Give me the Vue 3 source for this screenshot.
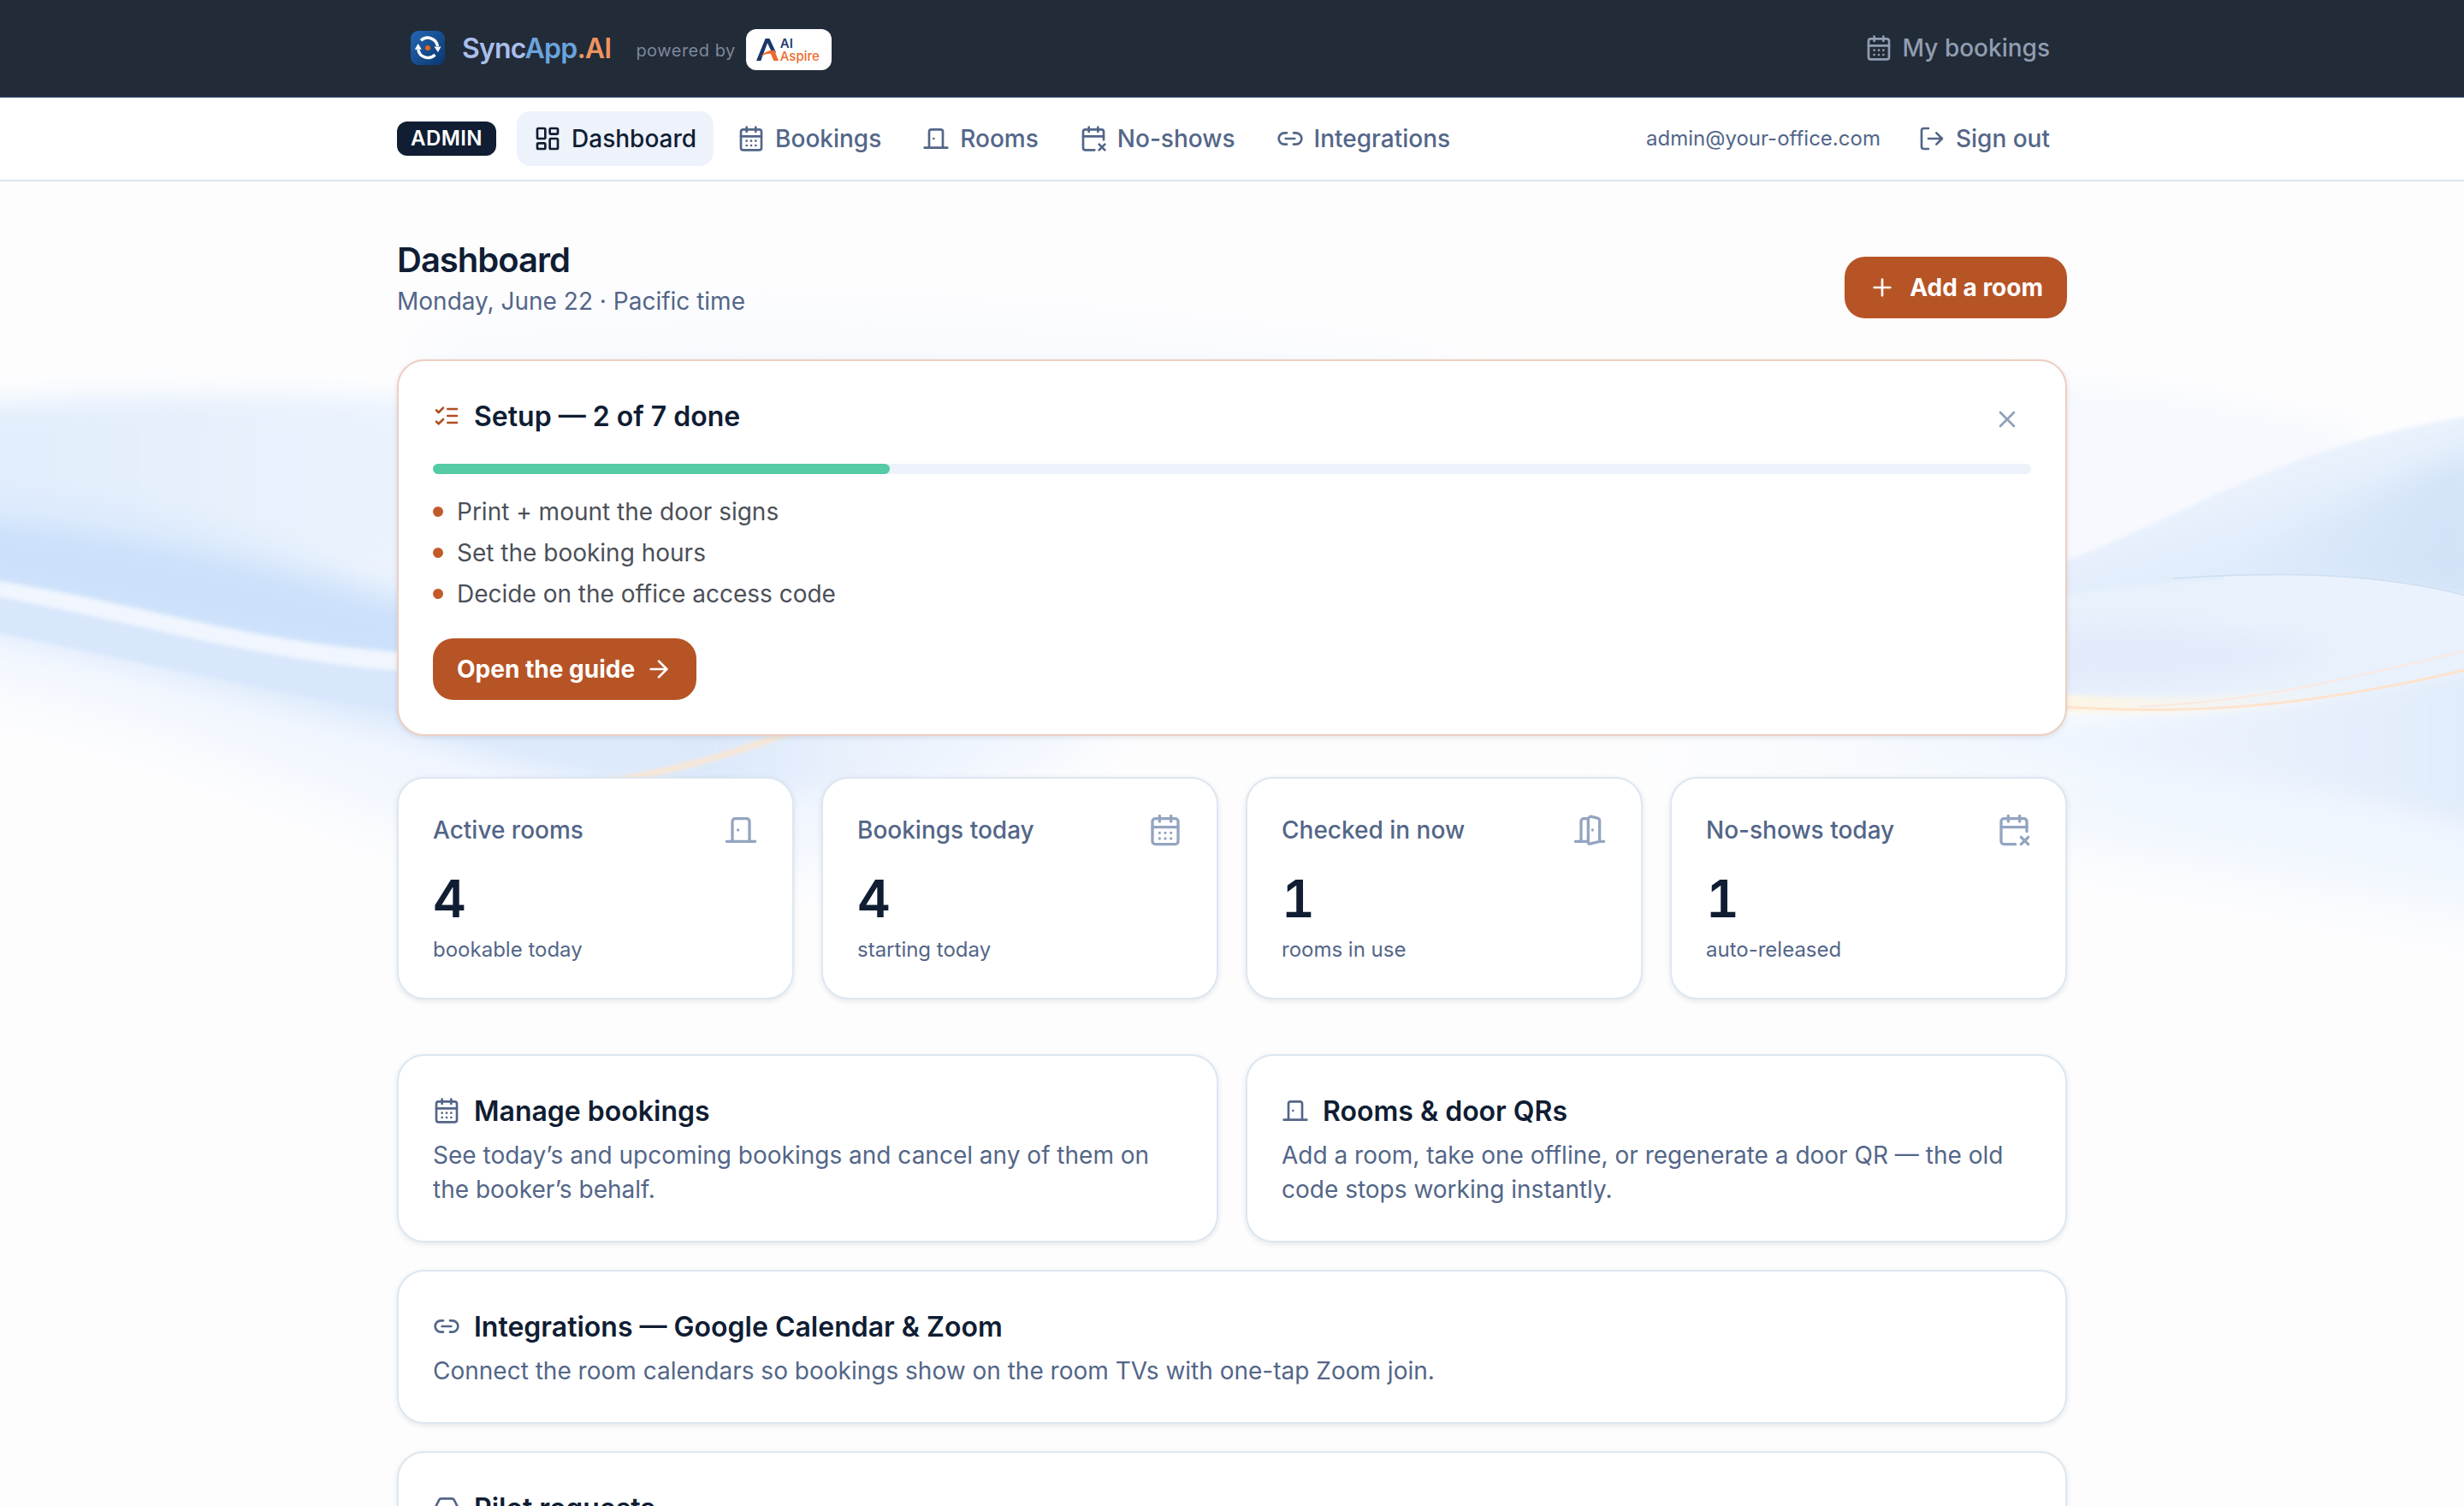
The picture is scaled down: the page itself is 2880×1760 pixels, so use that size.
<template>
  <div class="page">
    <!-- Soft wave artwork behind the whole page -->
    <svg class="waves" viewBox="0 0 2880 1760" preserveAspectRatio="none" aria-hidden="true">
      <defs>
        <filter id="blur-s" x="-10%" y="-50%" width="120%" height="200%"><feGaussianBlur stdDeviation="2.5" /></filter>
        <filter id="blur-m" x="-10%" y="-30%" width="120%" height="160%"><feGaussianBlur stdDeviation="14" /></filter>
        <filter id="blur-l" x="-10%" y="-40%" width="120%" height="180%"><feGaussianBlur stdDeviation="32" /></filter>
        <linearGradient id="left-fade" x1="0" y1="0" x2="1400" y2="0" gradientUnits="userSpaceOnUse">
          <stop offset="0" stop-color="#deebfd" />
          <stop offset="0.6" stop-color="#dce9fb" />
          <stop offset="1" stop-color="#fdfdfe" stop-opacity="0" />
        </linearGradient>
        <linearGradient id="left-top" x1="0" y1="0" x2="900" y2="0" gradientUnits="userSpaceOnUse">
          <stop offset="0" stop-color="#e2eefc" />
          <stop offset="1" stop-color="#f2f7fe" />
        </linearGradient>
        <linearGradient id="right-band" x1="2640" y1="520" x2="2700" y2="700" gradientUnits="userSpaceOnUse">
          <stop offset="0" stop-color="#edf4fd" />
          <stop offset="0.5" stop-color="#e3eefc" />
          <stop offset="1" stop-color="#dae8fa" />
        </linearGradient>
        <linearGradient id="right-deep" x1="2600" y1="0" x2="2880" y2="0" gradientUnits="userSpaceOnUse">
          <stop offset="0" stop-color="#cfe1f7" stop-opacity="0" />
          <stop offset="1" stop-color="#cfe1f7" stop-opacity="0.8" />
        </linearGradient>
        <linearGradient id="right-low" x1="2100" y1="0" x2="2880" y2="0" gradientUnits="userSpaceOnUse">
          <stop offset="0" stop-color="#f0f6fe" stop-opacity="0" />
          <stop offset="0.4" stop-color="#eff5fe" />
          <stop offset="1" stop-color="#e1ecfb" />
        </linearGradient>
        <linearGradient id="right-haze" x1="1900" y1="0" x2="2500" y2="0" gradientUnits="userSpaceOnUse">
          <stop offset="0" stop-color="#f0f6fe" stop-opacity="0" />
          <stop offset="1" stop-color="#f0f6fe" />
        </linearGradient>
        <linearGradient id="glow" x1="2380" y1="0" x2="2780" y2="0" gradientUnits="userSpaceOnUse">
          <stop offset="0" stop-color="#fff6e2" />
          <stop offset="1" stop-color="#fff8ee" stop-opacity="0" />
        </linearGradient>
      </defs>

      <path d="M500 400 C800 360 1200 370 1700 440 L1700 560 L500 560 Z" fill="#f7f9fe" filter="url(#blur-l)" />
      <path d="M-80 500 C150 480 300 480 480 500 L900 560 L1300 860 C1100 960 900 1060 700 1030 C450 990 250 840 -80 790 Z" fill="#f1f6fe" filter="url(#blur-l)" />
      <path d="M-60 478 C120 462 260 456 620 476 L620 700 C300 640 200 640 -60 640 Z" fill="url(#left-top)" filter="url(#blur-m)" />
      <path d="M-60 560 C150 570 280 630 480 690 L900 800 L1200 880 C900 960 700 930 480 860 C300 820 150 770 -60 730 Z" fill="url(#left-fade)" filter="url(#blur-m)" />
      <path d="M-60 605 C150 620 300 660 480 715 L480 775 C300 755 160 715 -60 675 Z" fill="#cbe0fb" filter="url(#blur-m)" />
      <path d="M-10 694 C160 724 300 772 480 784 L480 836 C300 806 150 770 -10 738 Z" fill="#d8e7fc" filter="url(#blur-s)" />
      <path d="M-10 678 C170 706 290 752 480 763 L480 785 C300 772 160 727 -10 696 Z" fill="#f1f6fe" filter="url(#blur-s)" />

      <path d="M2300 450 C2500 440 2600 470 2760 500 L2700 600 L2300 700 Z" fill="#f7f9fe" filter="url(#blur-m)" />
      <path d="M1900 840 C2500 850 2700 840 2940 780 L2940 1080 C2750 1050 2500 980 1900 930 Z" fill="url(#right-haze)" filter="url(#blur-l)" />
      <path d="M2100 850 C2600 860 2700 800 2940 770 L2940 980 C2800 940 2600 880 2100 880 Z" fill="url(#right-low)" filter="url(#blur-m)" />
      <path d="M2380 702 C2500 680 2720 655 2890 697 L2890 780 C2700 830 2560 836 2380 826 Z" fill="#e8f1fc" filter="url(#blur-s)" />
      <path d="M2380 740 C2500 725 2600 735 2720 760 C2620 800 2500 805 2380 800 Z" fill="#e3ebfb" filter="url(#blur-m)" />
      <path d="M2380 668 C2540 615 2660 520 2890 486 L2890 698 C2720 660 2560 676 2380 702 Z" fill="url(#right-band)" filter="url(#blur-s)" />
      <path d="M2600 650 C2700 610 2800 560 2890 530 L2890 695 C2800 672 2700 668 2600 672 Z" fill="url(#right-deep)" filter="url(#blur-m)" />
      <path d="M2600 674 C2700 668 2800 675 2890 698 L2890 730 L2600 730 Z" fill="#e9f2fd" />
      <path d="M2540 676 C2660 668 2780 668 2890 698" fill="none" stroke="#cddff2" stroke-width="1.5" />
      <path d="M2380 820 C2520 829 2640 826 2780 798" fill="none" stroke="url(#glow)" stroke-width="20" filter="url(#blur-s)" />
      <path d="M2380 824 C2560 838 2700 826 2890 781" fill="none" stroke="#fde3cd" stroke-width="3" />
      <path d="M2500 826 C2660 818 2760 788 2890 759" fill="none" stroke="#fbe8e0" stroke-width="2" />
      <path d="M700 916 C790 900 870 880 960 840" fill="none" stroke="#fde6cd" stroke-width="6" filter="url(#blur-s)" />
    </svg>

    <header class="topbar">
      <div class="container topbar-inner">
        <div class="brand">
          <svg class="logo" viewBox="0 0 40 40">
            <defs>
              <linearGradient id="logo-bg" x1="0" y1="0" x2="1" y2="1">
                <stop offset="0" stop-color="#2566b4" />
                <stop offset="1" stop-color="#08386f" />
              </linearGradient>
            </defs>
            <rect width="40" height="40" rx="9" fill="url(#logo-bg)" />
            <g fill="none" stroke="#fff" stroke-width="3.4">
              <path d="M12 11.3A11.6 11.6 0 0 1 31.4 18" />
              <path d="M28.500 28A11.600 11.600 0 0 1 8.800 22" />
            </g>
            <path d="M27.500 18.400h8l-3.600 6.600z" fill="#fff" />
            <path d="M4.800 21.800h8L8.700 15z" fill="#fff" />
            <circle cx="20" cy="20" r="3" fill="#e8661b" />
          </svg>
          <span class="brand-name"><span class="c-sync">Sync</span><span class="c-app">App</span><span class="c-ai">.AI</span></span>
          <span class="powered">powered by</span>
          <span class="aspire">
            <svg class="aspire-mark" viewBox="0 0 28 30">
              <path d="M0 28 11 1h5l8 17-6-2-4.500-9.500L5.500 28z" fill="#1b3767" />
              <path d="M5 23c5-5.500 11-8.500 17-7.500L27 28h-6l-3.500-8.500C13 19 9 20.500 5 23z" fill="#ec6a2d" />
            </svg>
            <span class="aspire-text"><b>AI</b><i>Aspire</i></span>
          </span>
        </div>
        <a class="my-bookings">
          <svg class="icon" viewBox="0 0 24 24" v-html="icons.calendar"></svg>
          My bookings
        </a>
      </div>
    </header>

    <nav class="adminbar">
      <div class="container adminbar-inner">
        <span class="badge">ADMIN</span>
        <a v-for="link in links" :key="link.label" class="tab" :class="{ active: link.active }">
          <svg class="icon" viewBox="0 0 24 24" v-html="icons[link.icon]"></svg>
          {{ link.label }}
        </a>
        <span class="email">admin@your-office.com</span>
        <a class="tab">
          <svg class="icon" viewBox="0 0 24 24" v-html="icons.signOut"></svg>
          Sign out
        </a>
      </div>
    </nav>

    <main class="container main">
      <div class="heading">
        <div>
          <h1>Dashboard</h1>
          <p>Monday, June 22 · Pacific time</p>
        </div>
        <button class="btn btn-add">
          <svg class="icon" viewBox="0 0 24 24" v-html="icons.plus"></svg>
          Add a room
        </button>
      </div>

      <section class="card setup">
        <div class="setup-head">
          <h2>
            <svg class="icon rust" viewBox="0 0 24 24" v-html="icons.checklist"></svg>
            <span>Setup — {{ setup.done }} of {{ setup.total }} done</span>
          </h2>
          <button class="close">
            <svg class="icon" viewBox="0 0 24 24" v-html="icons.close"></svg>
          </button>
        </div>
        <div class="progress">
          <div class="progress-fill" :style="{ width: progress + '%' }"></div>
        </div>
        <ul>
          <li v-for="step in setup.steps" :key="step">{{ step }}</li>
        </ul>
        <button class="btn">
          Open the guide
          <svg class="icon" viewBox="0 0 24 24" v-html="icons.arrow"></svg>
        </button>
      </section>

      <section class="stats">
        <div v-for="stat in stats" :key="stat.label" class="card">
          <div class="stat-head">
            <span>{{ stat.label }}</span>
            <svg class="icon icon-lg" viewBox="0 0 24 24" v-html="icons[stat.icon]"></svg>
          </div>
          <div class="stat-value">{{ stat.value }}</div>
          <div class="stat-note">{{ stat.note }}</div>
        </div>
      </section>

      <section class="shortcuts">
        <a v-for="item in shortcuts" :key="item.title" class="card" :class="{ wide: item.wide }">
          <h2>
            <svg class="icon slate" viewBox="0 0 24 24" v-html="icons[item.icon]"></svg>
            <span>{{ item.title }}</span>
          </h2>
          <p v-if="item.text">{{ item.text }}</p>
        </a>
      </section>
    </main>
  </div>
</template>

<script setup>
import { computed, reactive } from 'vue'

// Icon bodies, all on a 24x24 grid
const calendarBase = '<path d="M8 2v4M16 2v4M3 10h18"/>'
const icons = {
  dashboard:
    '<rect x="3" y="3" width="7" height="9" rx="1"/><rect x="14" y="3" width="7" height="5" rx="1"/><rect x="14" y="12" width="7" height="9" rx="1"/><rect x="3" y="16" width="7" height="5" rx="1"/>',
  calendar:
    calendarBase +
    '<rect x="3" y="4" width="18" height="18" rx="2"/><path d="M8 14h.01M12 14h.01M16 14h.01M8 18h.01M12 18h.01M16 18h.01"/>',
  calendarX:
    calendarBase +
    '<path d="M21 13V6a2 2 0 0 0-2-2H5a2 2 0 0 0-2 2v14a2 2 0 0 0 2 2h8M17 17l5 5M17 22l5-5"/>',
  door: '<path d="M18 20V6a2 2 0 0 0-2-2H8a2 2 0 0 0-2 2v14M2 20h20M10 12v.01"/>',
  doorOpen:
    '<path d="M11 20H2M11 4.562v16.157a1 1 0 0 0 1.242.97L19 20V5.562a2 2 0 0 0-1.515-1.940l-4-1A2 2 0 0 0 11 4.561zM11 4H8a2 2 0 0 0-2 2v14M14 12h.01M22 20h-3"/>',
  link: '<path d="M9 17H7A5 5 0 0 1 7 7h2M15 7h2a5 5 0 1 1 0 10h-2M8 12h8"/>',
  signOut: '<path d="M9 21H5a2 2 0 0 1-2-2V5a2 2 0 0 1 2-2h4M16 17l5-5-5-5M21 12H9"/>',
  plus: '<path d="M5 12h14M12 5v14"/>',
  arrow: '<path d="M5 12h14M12 5l7 7-7 7"/>',
  close: '<path d="M18 6 6 18M6 6l12 12"/>',
  checklist: '<path d="m3 17 2 2 4-4M3 7l2 2 4-4M13 6h8M13 12h8M13 18h8"/>',
  inbox:
    '<path d="M22 12h-6l-2 3h-4l-2-3H2"/><path d="M5.450 5.110 2 12v6a2 2 0 0 0 2 2h16a2 2 0 0 0 2-2v-6l-3.450-6.890A2 2 0 0 0 16.760 4H7.240a2 2 0 0 0-1.790 1.110z"/>',
}

const links = [
  { label: 'Dashboard', icon: 'dashboard', active: true },
  { label: 'Bookings', icon: 'calendar' },
  { label: 'Rooms', icon: 'door' },
  { label: 'No-shows', icon: 'calendarX' },
  { label: 'Integrations', icon: 'link' },
]

const setup = reactive({
  done: 2,
  total: 7,
  steps: ['Print + mount the door signs', 'Set the booking hours', 'Decide on the office access code'],
})
const progress = computed(() => (setup.done / setup.total) * 100)

const stats = [
  { label: 'Active rooms', value: 4, note: 'bookable today', icon: 'door' },
  { label: 'Bookings today', value: 4, note: 'starting today', icon: 'calendar' },
  { label: 'Checked in now', value: 1, note: 'rooms in use', icon: 'doorOpen' },
  { label: 'No-shows today', value: 1, note: 'auto-released', icon: 'calendarX' },
]

const shortcuts = [
  {
    title: 'Manage bookings',
    text: 'See today’s and upcoming bookings and cancel any of them on the booker’s behalf.',
    icon: 'calendar',
  },
  {
    title: 'Rooms & door QRs',
    text: 'Add a room, take one offline, or regenerate a door QR — the old code stops working instantly.',
    icon: 'door',
  },
  {
    title: 'Integrations — Google Calendar & Zoom',
    text: 'Connect the room calendars so bookings show on the room TVs with one-tap Zoom join.',
    icon: 'link',
    wide: true,
  },
  { title: 'Pilot requests', icon: 'inbox', wide: true },
]
</script>

<style>
body {
  background: #fdfdfe;
  overflow: hidden;
}
</style>

<style scoped>
.page {
  position: relative;
  height: 1760px;
  overflow: hidden;
  font-family: Inter, 'Liberation Sans', sans-serif;
  font-size: 28px;
  line-height: 40px;
  color: #101d33;
}

.waves {
  position: absolute;
  inset: 0;
  width: 100%;
  height: 100%;
}

.container {
  width: 1952px;
  margin: 0 auto;
}

h1,
h2,
p,
ul {
  margin: 0;
  padding: 0;
}

.icon {
  flex: none;
  width: 32px;
  height: 32px;
  fill: none;
  stroke: currentColor;
  stroke-width: 2;
  stroke-linecap: round;
  stroke-linejoin: round;
}

.icon-lg {
  width: 40px;
  height: 40px;
}

/* Top bar */
.topbar {
  position: relative;
  box-sizing: border-box;
  height: 114px;
  background: #222b38;
  border-bottom: 2px solid #22384f;
}

.topbar-inner {
  display: flex;
  align-items: center;
  justify-content: space-between;
  height: 112px;
}

.brand {
  display: flex;
  align-items: center;
  padding-left: 16px;
}

.logo {
  width: 40px;
  height: 40px;
}

.brand-name {
  margin-left: 20px;
  padding-top: 2px;
  font-size: 32px;
  font-weight: 600;
  letter-spacing: -0.8px;
}

.c-sync {
  color: #a9bfec;
}

.c-app {
  color: #6ba4de;
}

.c-ai {
  color: #ee945f;
}

.powered {
  margin-left: 29px;
  padding-top: 6px;
  font-size: 20px;
  letter-spacing: 0.5px;
  color: #7d889a;
}

.aspire {
  display: flex;
  align-items: center;
  box-sizing: border-box;
  width: 100px;
  height: 48px;
  margin: 4px 0 0 12px;
  padding-left: 12px;
  background: #fff;
  border-radius: 12px;
}

.aspire-mark {
  width: 27px;
  height: 29px;
}

.aspire-text {
  display: flex;
  flex-direction: column;
  margin-left: 1px;
  font-size: 15px;
  line-height: 15px;
}

.aspire-text b {
  font-weight: 600;
  color: #24406f;
}

.aspire-text i {
  font-style: normal;
  font-weight: 500;
  color: #ec6a2d;
}

.my-bookings {
  display: flex;
  align-items: center;
  gap: 12px;
  padding-right: 20px;
  font-weight: 500;
  color: #919db0;
}

/* Admin navigation */
.adminbar {
  position: relative;
  box-sizing: border-box;
  height: 98px;
  background: #fff;
  border-bottom: 2px solid #dce6f2;
}

.adminbar-inner {
  display: flex;
  align-items: center;
  gap: 8px;
  height: 96px;
}

.badge {
  margin-right: 16px;
  padding: 0 16px;
  font-size: 24px;
  font-weight: 600;
  letter-spacing: 0.45px;
  color: #fff;
  background: #101d33;
  border-radius: 12px;
}

.tab {
  display: flex;
  align-items: center;
  gap: 12px;
  height: 64px;
  padding: 0 20px;
  font-weight: 500;
  color: #536688;
  border-radius: 16px;
}

.tab.active {
  color: #101d33;
  background: #edf2fb;
}

.email {
  margin-left: auto;
  margin-right: 16px;
  font-size: 24px;
  color: #536688;
}

/* Page content */
.main {
  position: relative;
  padding-top: 64px;
}

.heading {
  display: flex;
  align-items: flex-end;
  justify-content: space-between;
  margin-bottom: 48px;
}

h1 {
  font-size: 40px;
  font-weight: 600;
  line-height: 56px;
  letter-spacing: -1px;
}

.heading p {
  color: #536688;
}

.btn {
  display: inline-flex;
  align-items: center;
  gap: 12px;
  height: 72px;
  padding: 0 28px;
  font-family: inherit;
  font-size: 28px;
  font-weight: 650;
  color: #fff;
  background: #b75425;
  border: none;
  border-radius: 24px;
}

.btn-add {
  gap: 16px;
}

.card {
  box-sizing: border-box;
  padding: 40px;
  background: #fff;
  border: 2px solid #dde7f1;
  border-radius: 32px;
  box-shadow: 0 2px 6px rgba(16, 29, 51, 0.1);
}

h2 {
  display: flex;
  align-items: center;
  gap: 16px;
  font-size: 32px;
  font-weight: 600;
  line-height: 48px;
}

h2 span {
  padding-top: 2px;
  line-height: 46px;
}

.rust {
  color: #b04e20;
}

.slate {
  color: #536688;
}

.setup {
  border-color: #edcfc1;
}

.setup-head {
  display: flex;
  align-items: flex-start;
  justify-content: space-between;
}

.close {
  display: flex;
  padding: 12px;
  color: #90a0b9;
  background: none;
  border: none;
}

.progress {
  height: 12px;
  margin-top: 24px;
  background: #edf2fb;
  border-radius: 6px;
}

.progress-fill {
  height: 100%;
  background: #54cba6;
  border-radius: 6px;
}

ul {
  display: flex;
  flex-direction: column;
  gap: 8px;
  margin: 24px 0 32px;
  list-style: none;
}

li {
  display: flex;
  align-items: center;
  gap: 16px;
  color: #4b5058;
}

li::before {
  content: '';
  width: 12px;
  height: 12px;
  background: #c25a2a;
  border-radius: 50%;
}

.setup .btn {
  display: flex;
}

/* Today's numbers */
.stats {
  display: grid;
  grid-template-columns: repeat(4, 1fr);
  gap: 32px;
  margin: 48px 0 64px;
}

.stat-head {
  display: flex;
  align-items: center;
  justify-content: space-between;
  font-weight: 500;
  color: #536688;
}

.stat-head .icon {
  color: #94a5c0;
}

.stat-value {
  margin: 24px 0 8px;
  font-size: 60px;
  font-weight: 600;
  line-height: 72px;
  font-variant-numeric: tabular-nums;
}

.stat-note {
  font-size: 24px;
  line-height: 32px;
  color: #536688;
}

/* Shortcut cards */
.shortcuts {
  display: grid;
  grid-template-columns: 1fr 1fr;
  gap: 32px;
}

.wide {
  grid-column: 1 / -1;
  min-height: 180px;
}

.shortcuts p {
  margin-top: 8px;
  color: #536688;
}
</style>
